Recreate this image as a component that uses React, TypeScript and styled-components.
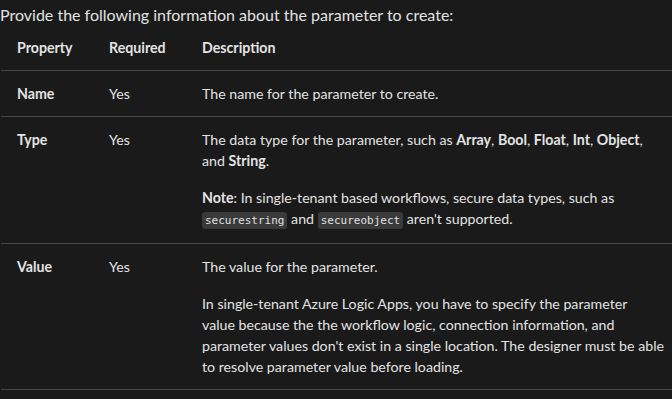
import React from "react";
import styled, { createGlobalStyle } from "styled-components";

const Global = createGlobalStyle`
  html, body { margin: 0; padding: 0; background: #1a1a1a; }
  body {
    color: #e3e3e3;
    font-family: Lato, "Noto Sans", sans-serif;
    font-size: 14.2px;
    line-height: 21px;
  }
`;

const Page = styled.div`
  padding: 4px 0 0 0;
`;

const Intro = styled.p`
  margin: 0;
  font-size: 16px;
  line-height: 21px;
`;

const Table = styled.table`
  border-collapse: collapse;
  margin: 0 0 0 1px;
  width: calc(100% - 1px);
`;

const Th = styled.th<{ $w?: number }>`
  text-align: left;
  font-weight: 700;
  padding: 12px 16px;
  width: ${(p) => (p.$w ? `${p.$w}px` : "auto")};
  border-bottom: 1px solid #474747;
  vertical-align: top;
  &:last-child { padding-right: 2px; }
`;

const Td = styled.td<{ $bold?: boolean }>`
  padding: 12px 16px;
  font-weight: ${(p) => (p.$bold ? 700 : 400)};
  border-bottom: 1px solid #474747;
  vertical-align: top;
  &:last-child { padding-right: 2px; }
`;

const P = styled.p`
  margin: 0 0 16px 0;
  &:last-child { margin-bottom: 0; }
`;

const Code = styled.code`
  font-family: "DejaVu Sans Mono", "Liberation Mono", monospace;
  font-size: 11px;
  color: #e0e0e0;
  background: #3a3a3a;
  border-radius: 3px;
  padding: 2px 3px;
`;

const B = styled.strong`
  font-weight: 700;
`;

export default function App() {
  return (
    <Page>
      <Global />
      <Intro>Provide the following information about the parameter to create:</Intro>
      <Table>
        <thead>
          <tr>
            <Th $w={60}>Property</Th>
            <Th $w={61}>Required</Th>
            <Th>Description</Th>
          </tr>
        </thead>
        <tbody>
          <tr>
            <Td $bold>Name</Td>
            <Td>Yes</Td>
            <Td>The name for the parameter to create.</Td>
          </tr>
          <tr>
            <Td $bold>Type</Td>
            <Td>Yes</Td>
            <Td>
              <P>
                The data type for the parameter, such as <B>Array</B>, <B>Bool</B>, <B>Float</B>, <B>Int</B>, <B>Object</B>,
                <br />
                and <B>String</B>.
              </P>
              <P>
                <B>Note</B>: In single-tenant based workflows, secure data types, such as
                <br />
                <Code>securestring</Code> and <Code>secureobject</Code> aren't supported.
              </P>
            </Td>
          </tr>
          <tr>
            <Td $bold>Value</Td>
            <Td>Yes</Td>
            <Td>
              <P>The value for the parameter.</P>
              <P>
                In single-tenant Azure Logic Apps, you have to specify the parameter
                <br />
                value because the the workflow logic, connection information, and
                <br />
                parameter values don't exist in a single location. The designer must be able
                <br />
                to resolve parameter value before loading.
              </P>
            </Td>
          </tr>
        </tbody>
      </Table>
    </Page>
  );
}
